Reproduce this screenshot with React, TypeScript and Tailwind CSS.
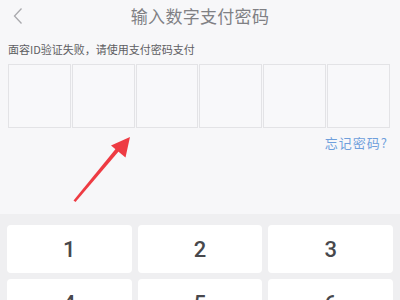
import React from "react";

const font = { fontFamily: '"Noto Sans CJK SC", "Noto Sans", sans-serif' };

export default function App() {
  const keys = ["1", "2", "3", "4", "5", "6"];
  return (
    <div className="relative w-[400px] h-[300px] overflow-hidden bg-[#f7f7f9]" style={font}>
      <div className="relative h-[30px] flex items-center justify-center">
        <svg className="absolute left-[13px] top-[7px]" width="10" height="18" viewBox="0 0 10 18">
          <path d="M8.5 1.5 L1.5 9 L8.5 16.5" fill="none" stroke="#a9a9ad" strokeWidth="1.3" />
        </svg>
        <span className="text-[17px] text-[#808084] leading-none tracking-[0.3px]">输入数字支付密码</span>
      </div>
      <div className="pl-[8px] pt-[12px] text-[11px] leading-[14px] text-[#5e5e62]">面容ID验证失败，请使用支付密码支付</div>
      <div className="mt-[8px] ml-[8px] w-[382px] grid grid-cols-6 gap-[1px]">
        {[0, 1, 2, 3, 4, 5].map((i) => (
          <div key={i} className="h-[64px] border border-[#e3e3e6] bg-[#f8f8fa]" />
        ))}
      </div>
      <div className="flex justify-end pr-[12px] mt-[7px]">
        <span className="text-[13px] leading-[16px] text-[#6f9fdc] tracking-[1px]">忘记密码?</span>
      </div>
      <div className="absolute left-0 top-[214px] w-[400px] h-[86px] bg-[#efeff1] px-[7px] pt-[11px] grid grid-cols-3 gap-x-[6px] gap-y-[6px] content-start">
        {keys.map((k) => (
          <div
            key={k}
            className="h-[48px] rounded-[4px] bg-white flex items-center justify-center text-[22px] font-medium text-[#48484c]"
            style={{ fontFamily: 'Roboto, "Noto Sans", sans-serif' }}
          >
            {k}
          </div>
        ))}
      </div>
      <svg className="absolute left-0 top-0 pointer-events-none" width="400" height="300" viewBox="0 0 400 300">
        <path d="M73.5 200.5 L75.5 202 L119 151 L116 148.5 Z" fill="#ee3b43" />
        <path d="M130 137 L111 145.5 L125.5 157.5 Z" fill="#ee3b43" />
      </svg>
    </div>
  );
}
